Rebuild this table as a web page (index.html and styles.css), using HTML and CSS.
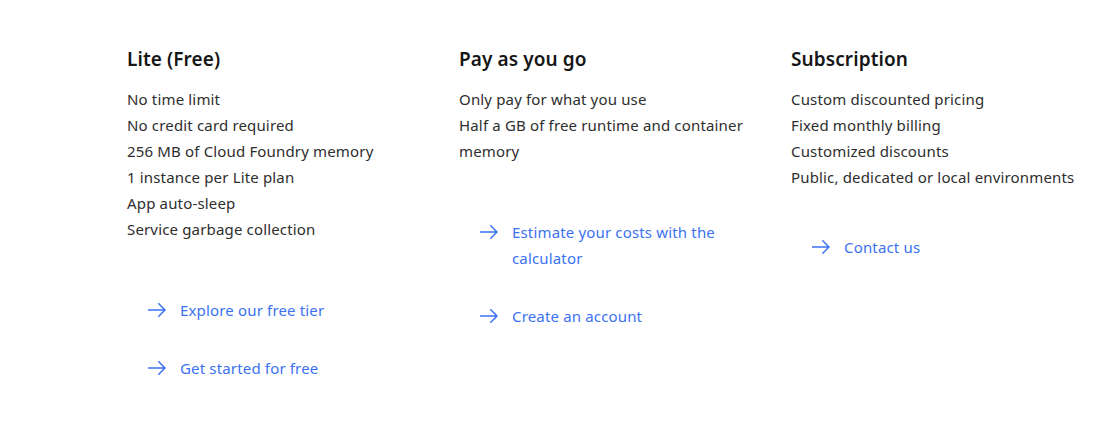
FILE: index.html
```html
<!DOCTYPE html>
<html lang="en">
<head>
<meta charset="utf-8">
<link rel="stylesheet" href="styles.css">
</head>
<body>
<main class="plans">
  <section class="plan">
    <h2 class="plan-title">Lite (Free)</h2>
    <ul class="features">
      <li>No time limit</li>
      <li>No credit card required</li>
      <li>256 MB of Cloud Foundry memory</li>
      <li>1 instance per Lite plan</li>
      <li>App auto-sleep</li>
      <li>Service garbage collection</li>
    </ul>
    <div class="links">
      <a class="link" href="#"><svg class="arrow" viewBox="0 0 20 20"><path d="M11.8 2.8L10.8 3.8 16.2 9.3 1 9.3 1 10.7 16.2 10.7 10.8 16.2 11.8 17.2 19 10z"/></svg><span>Explore our free tier</span></a>
      <a class="link" href="#"><svg class="arrow" viewBox="0 0 20 20"><path d="M11.8 2.8L10.8 3.8 16.2 9.3 1 9.3 1 10.7 16.2 10.7 10.8 16.2 11.8 17.2 19 10z"/></svg><span>Get started for free</span></a>
    </div>
  </section>
  <section class="plan">
    <h2 class="plan-title">Pay as you go</h2>
    <ul class="features">
      <li>Only pay for what you use</li>
      <li>Half a GB of free runtime and container memory</li>
    </ul>
    <div class="links">
      <a class="link" href="#"><svg class="arrow" viewBox="0 0 20 20"><path d="M11.8 2.8L10.8 3.8 16.2 9.3 1 9.3 1 10.7 16.2 10.7 10.8 16.2 11.8 17.2 19 10z"/></svg><span>Estimate your costs with the calculator</span></a>
      <a class="link" href="#"><svg class="arrow" viewBox="0 0 20 20"><path d="M11.8 2.8L10.8 3.8 16.2 9.3 1 9.3 1 10.7 16.2 10.7 10.8 16.2 11.8 17.2 19 10z"/></svg><span>Create an account</span></a>
    </div>
  </section>
  <section class="plan">
    <h2 class="plan-title">Subscription</h2>
    <ul class="features">
      <li>Custom discounted pricing</li>
      <li>Fixed monthly billing</li>
      <li>Customized discounts</li>
      <li>Public, dedicated or local environments</li>
    </ul>
    <div class="links links-tight">
      <a class="link" href="#"><svg class="arrow" viewBox="0 0 20 20"><path d="M11.8 2.8L10.8 3.8 16.2 9.3 1 9.3 1 10.7 16.2 10.7 10.8 16.2 11.8 17.2 19 10z"/></svg><span>Contact us</span></a>
    </div>
  </section>
</main>
</body>
</html>
```
FILE: styles.css
```css
html, body {
  margin: 0;
  padding: 0;
  background: #ffffff;
}
body {
  font-family: "Noto Sans", "Liberation Sans", sans-serif;
  color: #2e2e2e;
}
.plans {
  display: grid;
  grid-template-columns: repeat(3, 300px);
  column-gap: 32px;
  padding: 46px 0 0 127px;
}
.plan-title {
  margin: 0;
  font-size: 19px;
  line-height: 26px;
  font-weight: 600;
  color: #161616;
  letter-spacing: 0.1px;
}
.features {
  list-style: none;
  margin: 14px 0 0;
  padding: 0;
  font-size: 15px;
  line-height: 26px;
  letter-spacing: 0.16px;
}
.links {
  display: flex;
  flex-direction: column;
  gap: 32px;
  margin-top: 55px;
  padding-left: 20px;
}
.links-tight {
  margin-top: 44px;
}
.link {
  display: flex;
  align-items: flex-start;
  gap: 13px;
  font-size: 15px;
  line-height: 26px;
  letter-spacing: 0.16px;
  color: #3b72f2;
  text-decoration: none;
  padding-right: 16px;
}
.arrow {
  flex: none;
  width: 20px;
  height: 20px;
  margin-top: 3px;
  fill: #3b72f2;
}
```
